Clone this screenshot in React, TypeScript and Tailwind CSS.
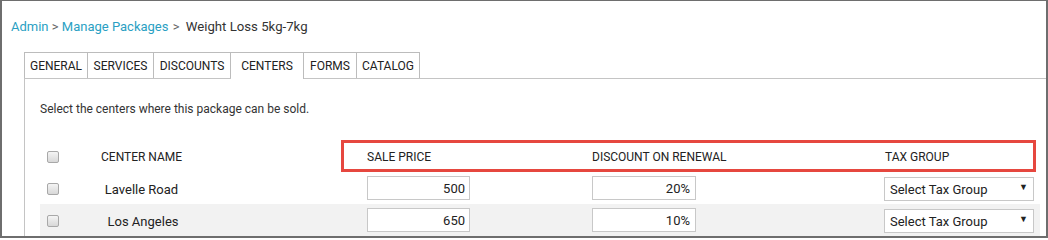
import React from "react";

function Check() {
  return (
    <div className="w-[12px] h-[12px] rounded-[2px] border border-[#a8a8a8] bg-gradient-to-b from-[#f4f4f4] to-[#d8d8d8]" />
  );
}

const tabs = [
  { label: "GENERAL", w: "w-[64px]", active: false },
  { label: "SERVICES", w: "w-[66px]", active: false },
  { label: "DISCOUNTS", w: "w-[77px]", active: false },
  { label: "CENTERS", w: "w-[73px]", active: true },
  { label: "FORMS", w: "w-[53px]", active: false },
  { label: "CATALOG", w: "w-[63px]", active: false },
];

const rows = [
  { name: "Lavelle Road", price: "500", disc: "20%", bg: "bg-white", np: "pl-[1px]" },
  { name: "Los Angeles", price: "650", disc: "10%", bg: "bg-[#f2f2f2]", np: "pl-[4px]" },
];

export default function App() {
  return (
    <div
      className="w-[1048px] h-[238px] overflow-hidden bg-white border-t border-l-2 border-r-2 border-b-2 border-[#6e6e6e] text-[#333]"
      style={{ fontFamily: "Roboto, 'Liberation Sans', sans-serif" }}
    >
      <div className="mt-[18px] pl-[9px] h-[16px] leading-[16px] text-[13px] flex items-baseline whitespace-pre">
        <span className="text-[#2a9fc3]">Admin</span>
        <span className="text-[#666]"> &gt; </span>
        <span className="text-[#2a9fc3]">Manage Packages</span>
        <span className="text-[#666] ml-[1px] mr-[3px]"> &gt; </span>
        <span className="text-[#333] text-[13.2px]">Weight Loss 5kg-7kg</span>
      </div>

      <div className="mt-[17px] ml-[22px] flex items-end border-b border-[#c4c4c4] h-[27px]">
        {tabs.map((t, i) => (
          <div
            key={t.label}
            className={`${t.w} flex items-center justify-center border-t border-r border-[#bcbcbc] text-[12px] text-[#222] bg-white ${
              i === 0 ? "border-l" : ""
            } ${t.active ? "h-[27px] -mb-px" : "h-[26px]"}`}
          >
            {t.label}
          </div>
        ))}
      </div>

      <div className="ml-[22px] border-l border-[#c4c4c4] h-[160px] pl-[15px]">
        <div className="pt-[22px] h-[16px] leading-[16px] text-[12px] box-content">
          Select the centers where this package can be sold.
        </div>

        <div className="relative mt-[23px] w-[1000px]">
          <div className="grid grid-cols-[30px_142px_155px_225px_292px_156px] h-[32px] pt-[2px] items-center text-[12px] text-[#222]">
            <div className="pl-[7px]">
              <Check />
            </div>
            <div className="pl-[31px]">CENTER NAME</div>
            <div />
            <div>SALE PRICE</div>
            <div>DISCOUNT ON RENEWAL</div>
            <div className="pl-[1px]">TAX GROUP</div>
          </div>

          {rows.map((r) => (
            <div
              key={r.name}
              className={`grid grid-cols-[30px_142px_155px_225px_292px_156px] h-[32px] items-center text-[13px] ${r.bg}`}
            >
              <div className="pl-[7px] pt-[2px]">
                <Check />
              </div>
              <div className={`text-center text-[#222] pt-[3px] ${r.np}`}>{r.name}</div>
              <div />
              <div>
                <div className="w-[103px] h-[24px] border border-[#c8c8c8] bg-white text-right pr-[4px] leading-[24px] text-[#222]">
                  {r.price}
                </div>
              </div>
              <div>
                <div className="w-[104px] h-[24px] border border-[#c8c8c8] bg-white text-right pr-[5px] leading-[24px] text-[#222]">
                  {r.disc}
                </div>
              </div>
              <div className="pt-[1px]">
                <div className="w-[150px] h-[24px] border border-[#c8c8c8] bg-white flex items-center justify-between pl-[5px] pr-[5px] pt-[2px] text-[#222]">
                  <span>Select Tax Group</span>
                  <span className="text-[9px] text-[#222] -mt-[3px]">▼</span>
                </div>
              </div>
            </div>
          ))}

          <div className="absolute left-[301px] top-0 w-[695px] h-[32px] border-[3px] border-[#e6473f] pointer-events-none" />
        </div>
      </div>
    </div>
  );
}
